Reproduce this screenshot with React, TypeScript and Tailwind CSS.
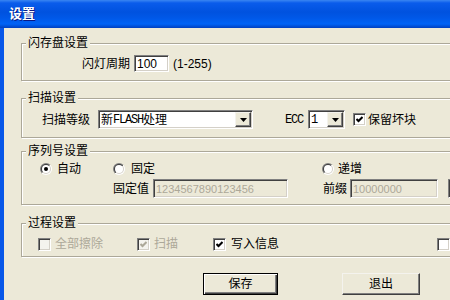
import type { ReactNode } from 'react'

const sunken =
  'border border-t-[#808080] border-l-[#808080] border-b-white border-r-white shadow-[inset_1px_1px_0_#404040,inset_-1px_-1px_0_#D4D0C8]'
const raised =
  'border border-t-[#F4F3EE] border-l-[#F4F3EE] border-b-[#404040] border-r-[#404040] shadow-[inset_-1px_-1px_0_#808080]'

function Group({ title, className, children }: { title: string; className: string; children: ReactNode }) {
  return (
    <fieldset
      className={`w-[440px] min-w-0 shrink-0 border border-[#ACA899] shadow-[inset_1px_1px_0_#fff,1px_1px_0_#fff] ${className}`}
    >
      <legend className="ml-[4px] px-[2px] bg-[#ECE9D8] leading-[14px]">{title}</legend>
      {children}
    </fieldset>
  )
}

function Mono({ children }: { children: ReactNode }) {
  return <span className="font-['Liberation_Mono',monospace] tracking-[-1.2px]">{children}</span>
}

function Check({ checked, disabled }: { checked?: boolean; disabled?: boolean }) {
  return (
    <span
      className={`${sunken} w-[13px] h-[13px] shrink-0 flex items-center justify-center ${
        disabled ? 'bg-[#F4F3EE]' : 'bg-white'
      }`}
    >
      {checked && (
        <svg width="7" height="7" viewBox="0 0 7 7">
          <polyline
            points="0.5,3 2.5,5 6.5,1"
            fill="none"
            stroke={disabled ? '#ACA899' : '#000'}
            strokeWidth="2"
          />
        </svg>
      )}
    </span>
  )
}

function Radio({ checked }: { checked?: boolean }) {
  return (
    <svg width="12" height="12" viewBox="0 0 12 12" className="shrink-0">
      <defs>
        <linearGradient id="rOut" x1="0" y1="0" x2="1" y2="1">
          <stop offset="0.5" stopColor="#808080" />
          <stop offset="0.5" stopColor="#ffffff" />
        </linearGradient>
        <linearGradient id="rIn" x1="0" y1="0" x2="1" y2="1">
          <stop offset="0.5" stopColor="#404040" />
          <stop offset="0.5" stopColor="#D4D0C8" />
        </linearGradient>
      </defs>
      <circle cx="6" cy="6" r="6" fill="url(#rOut)" />
      <circle cx="6" cy="6" r="5" fill="url(#rIn)" />
      <circle cx="6" cy="6" r="4" fill="#fff" />
      {checked && <circle cx="6" cy="6" r="2" fill="#000" />}
    </svg>
  )
}

function Combo({ w, children }: { w: string; children: ReactNode }) {
  return (
    <div className={`${sunken} ${w} h-[19px] shrink-0 bg-white p-[1px] flex items-stretch`}>
      <div className="flex-1 flex items-center pl-[1px] overflow-hidden whitespace-nowrap">{children}</div>
      <div className={`${raised} w-[16px] bg-[#ECE9D8] flex items-center justify-center`}>
        <svg width="7" height="4" viewBox="0 0 7 4">
          <path d="M0 0h7L3.5 4z" fill="#000" />
        </svg>
      </div>
    </div>
  )
}

export default function App() {
  return (
    <div className="w-[450px] h-[300px] overflow-hidden bg-[#ECE9D8] font-['Liberation_Sans','Noto_Sans_CJK_SC',sans-serif] text-[12px] leading-[14px] text-black whitespace-nowrap">
      {/* 标题栏 */}
      <div className="h-[28px] flex items-center pl-[9px] bg-[linear-gradient(#3A86F2_0px,#0A5CEB_3px,#0052DF_12px,#0058E8_18px,#0063F6_24px,#0040C0_28px)] text-white font-bold text-[13px] [text-shadow:1px_1px_0_#0A1883]">
        设置
      </div>

      <div className="flex h-[272px]">
        <div className="w-[4px] shrink-0 bg-[#0857E8]" />
        <div className="flex-1 min-w-0 flex flex-col pl-[17px]">
          {/* 闪存盘设置 */}
          <Group title="闪存盘设置" className="mt-[8px] pb-[8px]">
            <div className="mt-[5px] h-[17px] flex items-center pl-[60px] [&>*]:shrink-0">
              <span className="w-[48px]">闪灯周期</span>
              <div className={`${sunken} ml-[4px] w-[35px] h-[17px] bg-white flex items-center pl-[2px]`}>100</div>
              <span className="ml-[4px]">(1-255)</span>
            </div>
          </Group>

          {/* 扫描设置 */}
          <Group title="扫描设置" className="mt-[10px] pb-[8px]">
            <div className="mt-[5px] h-[19px] flex items-center pl-[20px] [&>*]:shrink-0">
              <span className="w-[48px]">扫描等级</span>
              <div className="ml-[8px]">
                <Combo w="w-[155px]">
                  新<Mono>FLASH</Mono>处理
                </Combo>
              </div>
              <span className="ml-[32px] w-[18px]">
                <Mono>ECC</Mono>
              </span>
              <div className="ml-[5px]">
                <Combo w="w-[37px]">
                  <Mono>1</Mono>
                </Combo>
              </div>
              <span className="ml-[8px]">
                <Check checked />
              </span>
              <span className="ml-[2px]">保留坏块</span>
            </div>
          </Group>

          {/* 序列号设置 */}
          <Group title="序列号设置" className="mt-[6px] pb-[6px]">
            <div className="mt-[4px] h-[14px] flex items-center pl-[18px] [&>*]:shrink-0">
              <div className="w-[73px] flex items-center gap-[5px]">
                <Radio checked />
                <span>自动</span>
              </div>
              <div className="w-[209px] flex items-center gap-[6px]">
                <Radio />
                <span>固定</span>
              </div>
              <div className="flex items-center gap-[4px]">
                <Radio />
                <span>递增</span>
              </div>
            </div>
            <div className="mt-[3px] h-[19px] flex items-center pl-[91px] [&>*]:shrink-0">
              <span className="w-[36px]">固定值</span>
              <div className={`${sunken} ml-[4px] w-[135px] h-[19px] flex items-center pl-[2px] text-[11px] text-[#ACA899]`}>
                1234567890123456
              </div>
              <span className="ml-[35px] w-[24px]">前缀</span>
              <div className={`${sunken} ml-[3px] w-[88px] h-[19px] flex items-center pl-[2px] text-[11px] text-[#ACA899]`}>
                10000000
              </div>
              <div className={`${sunken} ml-[10px] w-[40px] h-[19px]`} />
            </div>
          </Group>

          {/* 过程设置 */}
          <Group title="过程设置" className="mt-[11px] pb-[5px]">
            <div className="mt-[7px] h-[14px] flex items-center pl-[16px] [&>*]:shrink-0">
              <div className="w-[99px] flex items-center gap-[4px] text-[#ACA899]">
                <Check disabled />
                <span>全部擦除</span>
              </div>
              <div className="w-[76px] flex items-center gap-[4px] text-[#ACA899]">
                <Check checked disabled />
                <span>扫描</span>
              </div>
              <div className="w-[224px] flex items-center gap-[5px]">
                <Check checked />
                <span>写入信息</span>
              </div>
              <Check />
            </div>
          </Group>

          {/* 操作 */}
          <div className="mt-[16px] flex items-center pl-[182px] [&>*]:shrink-0">
            <button className="w-[75px] h-[22px] bg-[#ECE9D8] border border-black shadow-[inset_1px_1px_0_#fff,inset_-1px_-1px_0_#404040,inset_-2px_-2px_0_#808080] flex items-center justify-center">
              保存
            </button>
            <button className={`${raised} ml-[64px] w-[78px] h-[22px] bg-[#ECE9D8] flex items-center justify-center`}>
              退出
            </button>
          </div>
        </div>
      </div>
    </div>
  )
}
